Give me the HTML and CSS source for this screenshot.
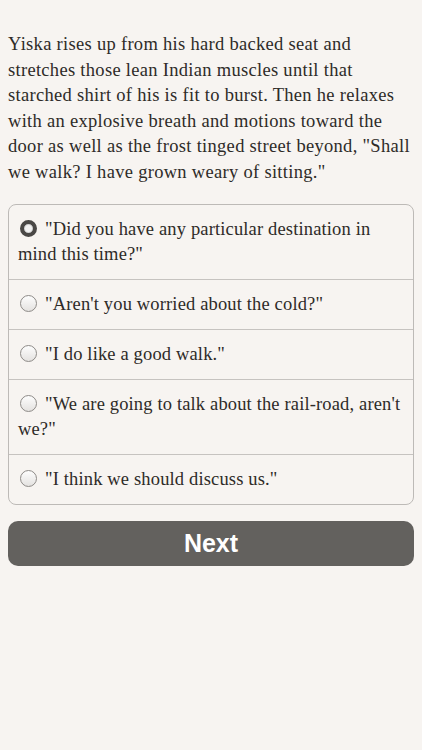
FILE: index.html
```html
<!DOCTYPE html>
<html lang="en">
<head>
  <meta charset="UTF-8">
  <meta name="viewport" content="width=device-width, initial-scale=1.0">
  <title>Story</title>
  <link rel="stylesheet" href="styles.css">
</head>
<body>
  <p class="story">Yiska rises up from his hard backed seat and stretches those lean Indian muscles until that starched shirt of his is fit to burst. Then he relaxes with an explosive breath and motions toward the door as well as the frost tinged street beyond, "Shall we walk? I have grown weary of sitting."</p>

  <form class="choices">
    <label class="choice">
      <input type="radio" name="choice" checked>
      <span class="dot"></span>"Did you have any particular destination in mind this time?"
    </label>
    <label class="choice">
      <input type="radio" name="choice">
      <span class="dot"></span>"Aren't you worried about the cold?"
    </label>
    <label class="choice">
      <input type="radio" name="choice">
      <span class="dot"></span>"I do like a good walk."
    </label>
    <label class="choice">
      <input type="radio" name="choice">
      <span class="dot"></span>"We are going to talk about the rail-road, aren't we?"
    </label>
    <label class="choice">
      <input type="radio" name="choice">
      <span class="dot"></span>"I think we should discuss us."
    </label>
  </form>

  <button class="next" type="button">Next</button>
</body>
</html>
```

FILE: styles.css
```css
body {
  margin: 0;
  padding: 0 8px;
  background: #f7f4f1;
  color: #2e2b28;
  font-family: "Liberation Serif", "Times New Roman", serif;
  font-size: 18.5px;
  letter-spacing: 0.3px;
}
.story {
  margin: 32px 0 19px;
  line-height: 25.5px;
}
.choices {
  border: 1px solid #bdbab7;
  border-radius: 8px;
  overflow: hidden;
}
.choice {
  display: block;
  padding: 12px 4px 12px 9px;
  line-height: 25px;
  letter-spacing: 0.15px;
  border-top: 1px solid #c6c3c0;
  cursor: pointer;
}
.choice:first-child {
  border-top: none;
}
.choice input {
  display: none;
}
.dot {
  display: inline-block;
  box-sizing: border-box;
  width: 17px;
  height: 17px;
  margin: 0 8px 0 2px;
  vertical-align: -2px;
  border-radius: 50%;
  border: 1px solid #8e8b88;
  background: linear-gradient(#fdfdfd, #e4e2e0);
}
.choice input:checked + .dot {
  border: 4px solid #4a4846;
  background: #f2f2f2;
  box-shadow: inset 0 0 0 1px #d0d0d0;
}
.next {
  display: block;
  width: 100%;
  height: 45px;
  margin-top: 16px;
  border: none;
  border-radius: 10px;
  background: #63615e;
  color: #fff;
  font-family: "Liberation Sans", Arial, sans-serif;
  font-weight: bold;
  font-size: 25px;
  letter-spacing: 0;
  cursor: pointer;
}
```
